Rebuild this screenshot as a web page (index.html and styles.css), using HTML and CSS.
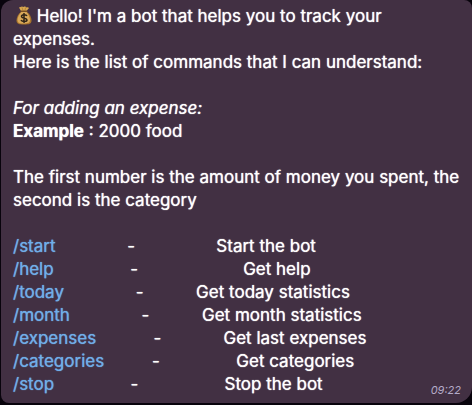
FILE: index.html
```
<!DOCTYPE html>
<html lang="en">
<head>
<meta charset="utf-8">
<meta name="viewport" content="width=device-width, initial-scale=1">
<title>Expense bot</title>
<link rel="stylesheet" href="styles.css">
</head>
<body>
<main class="chat">
<article class="bubble">
<p class="text"><svg class="moneybag" viewBox="0 0 32 38" aria-hidden="true"><path fill="#a8742b" d="M11 11C4 16 1 23 1 29c0 7 5 8 15 8s15-1 15-8c0-6-3-13-10-18z"/><path fill="#d9a95a" d="M12 11C6 16 3 23 3 28c0 6 4 7 13 7s12-2 12-7c0-5-3-12-8-17z"/><path fill="#d9a84f" d="M10 10 6 3c2 0 4-2 6-2 2 1 3 1 5 0 2 0 3 1 4 2 2-1 4 0 5 1l-5 6z"/><path fill="none" stroke="#8d602a" stroke-width="1" d="M12 3l2 6M19 3l-1 6"/><rect x="9" y="9" width="14" height="3" rx="1" fill="#795023"/><path fill="none" stroke="#302416" stroke-width="3" d="M22 20c-2-4-12-3-11 1 0 4 11 3 11 7 0 4-10 4-12 0M16 14v20"/></svg> Hello! I'm a bot that helps you to track your expenses.<br>Here is the list of commands that I can understand:</p>
<p class="text"><em>For adding an expense:</em><br><strong>Example</strong> : 2000 food</p>
<p class="text">The first number is the amount of money you spent, the second is the category</p>
<ul class="commands">
<li><a href="#start">/start</a>               -                 Start the bot</li>
<li><a href="#help">/help</a>                -                      Get help</li>
<li><a href="#today">/today</a>               -           Get today statistics</li>
<li><a href="#month">/month</a>               -           Get month statistics</li>
<li><a href="#expenses">/expenses</a>            -             Get last expenses</li>
<li><a href="#categories">/categories</a>          -                Get categories</li>
<li><a href="#stop">/stop</a>                -                  Stop the bot</li>
</ul>
<time class="time" datetime="09:22">09:22</time>
</article>
</main>
</body>
</html>
```
FILE: styles.css
```
* { box-sizing: border-box; }
body {
  margin: 0;
  background: #08030c;
  color: #fff;
  font-family: Inter, "Liberation Sans", sans-serif;
  font-size: 17px;
  line-height: 23px;
  text-shadow: 0 0 1px currentColor;
}
.chat { padding: 0 0 2px 1px; }
.bubble {
  position: relative;
  padding: 5px 12px 7px;
  border-radius: 12px 8px 16px 8px;
  background: #423043;
}
.text { margin: 0 0 23px; }
.moneybag {
  width: 16px;
  height: 19px;
  margin-left: 3px;
  vertical-align: -3px;
}
.commands {
  margin: 0;
  padding: 0;
  list-style: none;
}
.commands li { white-space: pre; }
.commands a { color: #70aee8; text-decoration: none; }
.time {
  position: absolute;
  right: 11px;
  bottom: 6px;
  color: #b4abc8;
  font-size: 11px;
  font-style: italic;
  line-height: 14px;
  text-shadow: none;
}
```
